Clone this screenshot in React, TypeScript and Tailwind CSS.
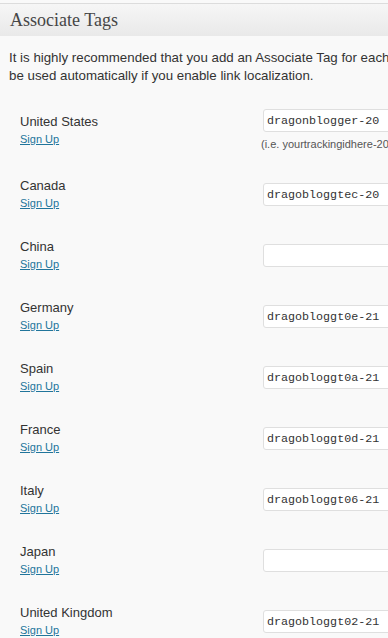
import React from "react";

type Locale = { name: string; tag: string; hint?: string };

const locales: Locale[] = [
  { name: "United States", tag: "dragonblogger-20", hint: "(i.e. yourtrackingidhere-20)" },
  { name: "Canada", tag: "dragobloggtec-20" },
  { name: "China", tag: "" },
  { name: "Germany", tag: "dragobloggt0e-21" },
  { name: "Spain", tag: "dragobloggt0a-21" },
  { name: "France", tag: "dragobloggt0d-21" },
  { name: "Italy", tag: "dragobloggt06-21" },
  { name: "Japan", tag: "" },
  { name: "United Kingdom", tag: "dragobloggt02-21" },
];

function TagRow({ locale, first }: { locale: Locale; first?: boolean }) {
  return (
    <div className={first ? "flex h-[69px]" : "flex h-[61px]"}>
      <div className={first ? "w-[263px] shrink-0 pl-[20px] pt-[5px]" : "w-[263px] shrink-0 pl-[20px]"}>
        <div className="text-[13px] leading-[16px] text-[#333]">{locale.name}</div>
        <a href="#" className="mt-[2px] block text-[11px] leading-[14px] text-[#21759b] underline">
          Sign Up
        </a>
      </div>
      <div className={first ? "shrink-0" : "shrink-0 pt-[5px]"}>
        <input
          type="text"
          defaultValue={locale.tag}
          className="box-border block h-[23px] w-[170px] rounded-[3px] border border-[#dfdfdf] bg-white px-[3px] font-['Liberation_Mono',monospace] text-[11.7px] text-[#333] outline-none"
        />
        {locale.hint && (
          <div className="ml-[-2px] mt-[5px] whitespace-nowrap text-[11px] leading-[14px] text-[#555]">
            {locale.hint}
          </div>
        )}
      </div>
    </div>
  );
}

export default function App() {
  return (
    <div className="h-[638px] w-[388px] overflow-hidden bg-[#f9f9f9] pt-[3px] font-['Liberation_Sans',Arial,sans-serif]">
      <div className="h-[33px] w-[600px] border-t border-[#dcdcdc] bg-gradient-to-b from-[#f6f6f6] to-[#e9e9e9] pl-[10px] font-['Liberation_Serif',serif] text-[18px] leading-[32px] text-[#464646]">
        Associate Tags
      </div>
      <div className="mt-[13px] pl-[9px] text-[13.3px] leading-[18px] text-[#333]">
        <div className="whitespace-nowrap">It is highly recommended that you add an Associate Tag for each</div>
        <div className="whitespace-nowrap">be used automatically if you enable link localization.</div>
      </div>
      <div className="mt-[24px]">
        {locales.map((l, i) => (
          <TagRow key={l.name} locale={l} first={i === 0} />
        ))}
      </div>
    </div>
  );
}
